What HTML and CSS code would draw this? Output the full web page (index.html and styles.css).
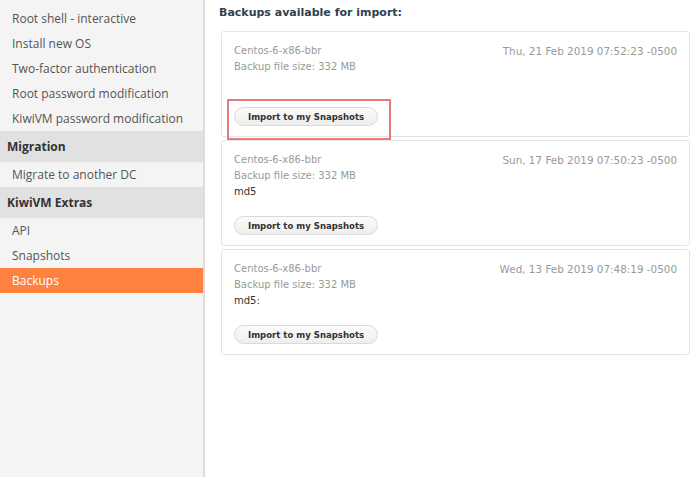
FILE: index.html
```html
<!DOCTYPE html>
<html lang="en">
<head>
  <meta charset="UTF-8">
  <title>KiwiVM - Backups</title>
  <link rel="stylesheet" href="styles.css">
</head>
<body>
  <div id="panel">
    <div id="sidebar">
      <ul class="menu">
        <li><a href="#">Root shell - interactive</a></li>
        <li><a href="#">Install new OS</a></li>
        <li><a href="#">Two-factor authentication</a></li>
        <li><a href="#">Root password modification</a></li>
        <li><a href="#">KiwiVM password modification</a></li>
        <li class="menu-header">Migration</li>
        <li><a href="#">Migrate to another DC</a></li>
        <li class="menu-header">KiwiVM Extras</li>
        <li><a href="#">API</a></li>
        <li><a href="#">Snapshots</a></li>
        <li class="active"><a href="#">Backups</a></li>
      </ul>
    </div>

    <div id="content">
      <h3>Backups available for import:</h3>

      <div class="backup">
        <div class="backup-date">Thu, 21 Feb 2019 07:52:23 -0500</div>
        <p class="muted">Centos-6-x86-bbr</p>
        <p class="muted">Backup file size: 332 MB</p>
        <p>&nbsp;</p>
        <button class="import-button">Import to my Snapshots</button>
        <div class="highlight"></div>
      </div>

      <div class="backup">
        <div class="backup-date">Sun, 17 Feb 2019 07:50:23 -0500</div>
        <p class="muted">Centos-6-x86-bbr</p>
        <p class="muted">Backup file size: 332 MB</p>
        <p>md5</p>
        <button class="import-button">Import to my Snapshots</button>
      </div>

      <div class="backup">
        <div class="backup-date">Wed, 13 Feb 2019 07:48:19 -0500</div>
        <p class="muted">Centos-6-x86-bbr</p>
        <p class="muted">Backup file size: 332 MB</p>
        <p>md5:</p>
        <button class="import-button">Import to my Snapshots</button>
      </div>
    </div>
  </div>
</body>
</html>
```

FILE: styles.css
```css
html, body {
  height: 100%;
}
body {
  margin: 0;
  background: #fff;
  overflow: hidden;
}
#panel {
  display: flex;
  height: 100%;
}
#sidebar {
  width: 203px;
  flex-shrink: 0;
  background: #f4f4f4;
  border-right: 2px solid #dcdcdc;
  padding-top: 6px;
  font-family: 'Open Sans', sans-serif;
  font-size: 12px;
}
.menu {
  list-style: none;
  margin: 0;
  padding: 0;
}
.menu li a {
  display: block;
  height: 25px;
  line-height: 25px;
  padding-left: 12px;
  color: #555;
  text-decoration: none;
}
.menu-header {
  height: 31px;
  line-height: 31px;
  padding-left: 7px;
  background: #e1e1e1;
  color: #333;
  font-weight: bold;
}
.menu li.active a {
  background: #ff8140;
  color: #fff;
}
#content {
  flex: 1;
  padding: 0 10px 0 16px;
  font-family: 'DejaVu Sans', Verdana, sans-serif;
  font-size: 10px;
}
#content h3 {
  margin: 5px 0 10px -2px;
  font-size: 11px;
  line-height: 16px;
  color: #2f4050;
}
.backup {
  position: relative;
  border: 1px solid #e4e4e4;
  border-radius: 3px;
  padding: 11px 12px 10px;
  margin-bottom: 3px;
  line-height: 16px;
}
.backup p {
  margin: 0;
  color: #333;
}
.backup p.muted {
  color: #999;
}
.backup-date {
  float: right;
  font-size: 10.4px;
  color: #999;
}
.import-button {
  display: block;
  margin-top: 16px;
  height: 19px;
  padding: 0 13px;
  border: 1px solid #dadada;
  border-radius: 10px;
  background: linear-gradient(#fbfbfb, #eeeeee);
  font-family: 'DejaVu Sans Condensed', 'DejaVu Sans', sans-serif;
  font-size: 9.5px;
  font-weight: bold;
  color: #333;
}
.highlight {
  position: absolute;
  left: 5px;
  top: 67px;
  width: 160px;
  height: 37px;
  border: 2px solid #e77a7a;
}
```
